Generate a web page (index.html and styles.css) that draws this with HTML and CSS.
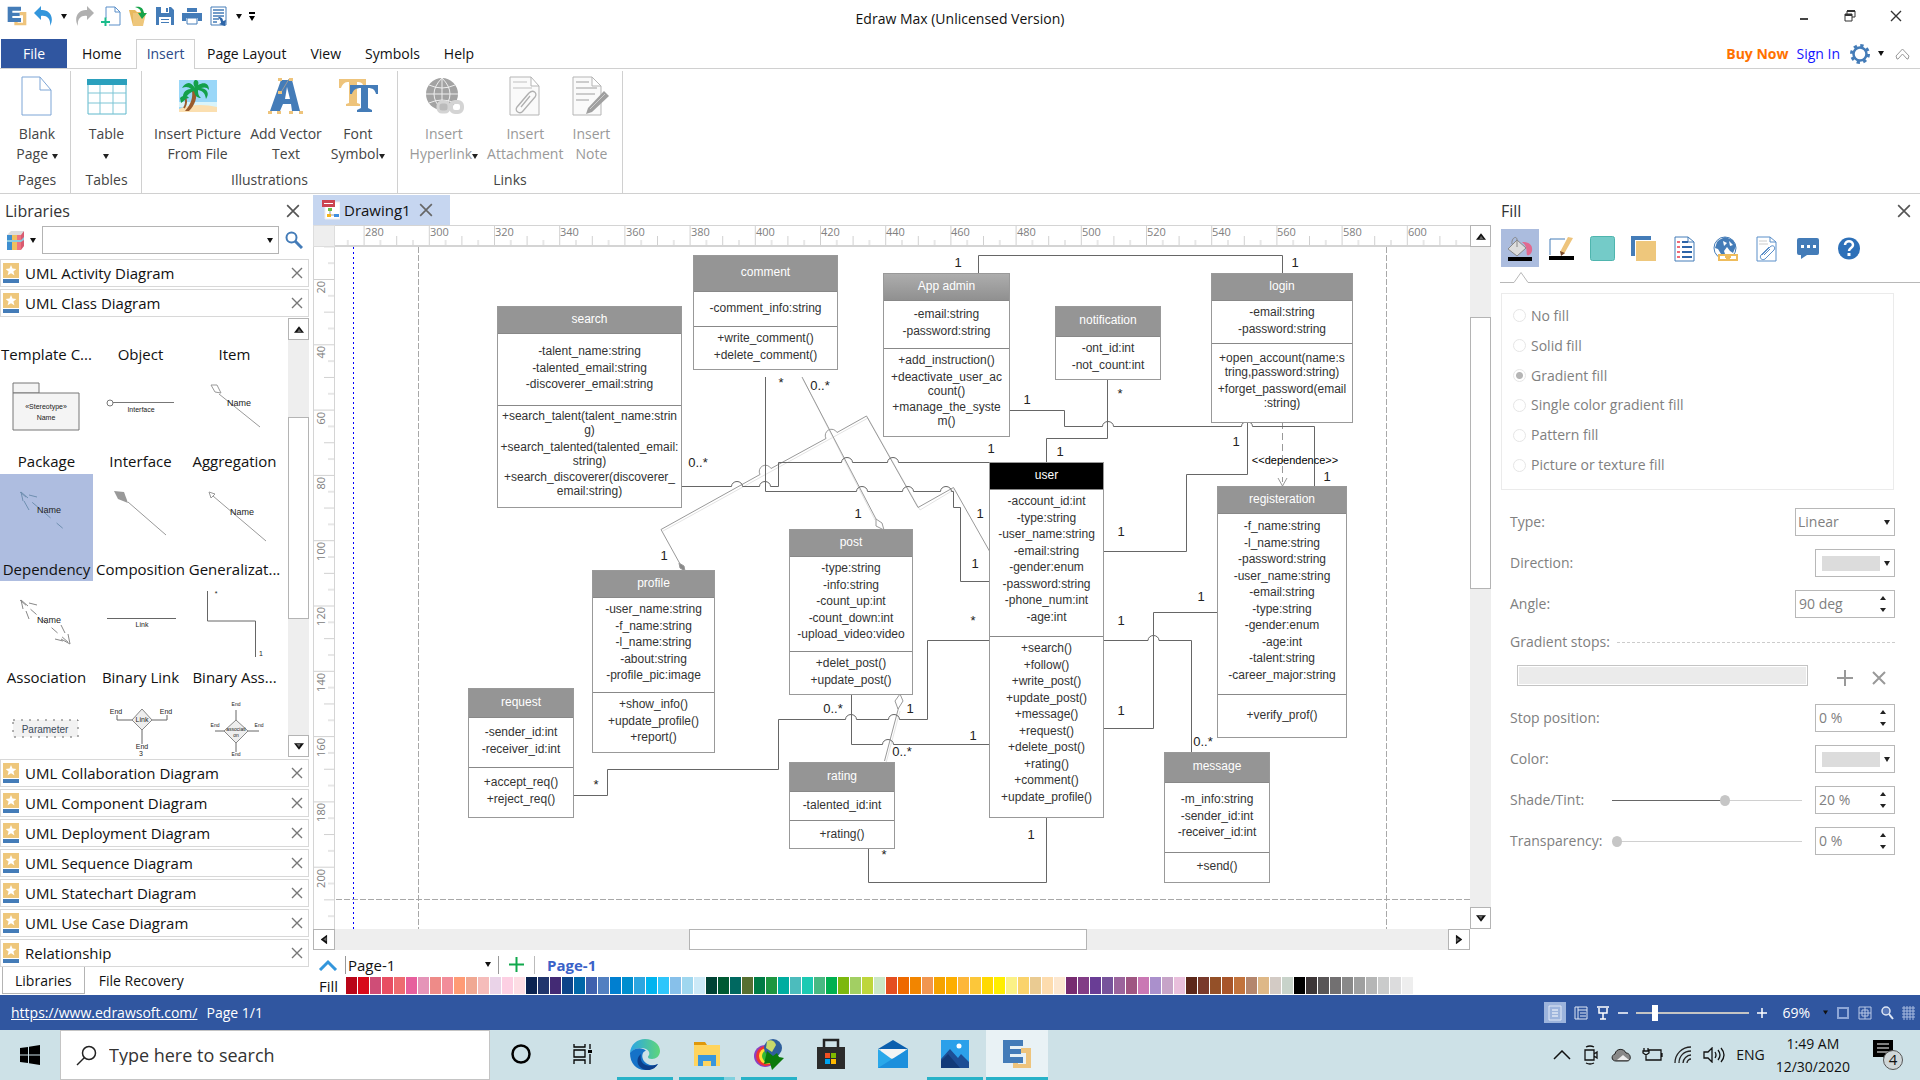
FILE: index.html
```html
<!DOCTYPE html>
<html lang="en">
<head>
<meta charset="utf-8">
<title>Edraw Max (Unlicensed Version)</title>
<link rel="stylesheet" href="styles.css">
</head>
<body>
<svg class="defs" aria-hidden="true">
  <symbol id="close" viewBox="0 0 12 12"><path d="M1 1l10 10M11 1L1 11" fill="none" stroke="currentColor" stroke-width="1.4"/></symbol>
  <symbol id="caret" viewBox="0 0 6 5"><path d="M0 0h6L3 5z" fill="currentColor"/></symbol>
  <symbol id="tri" viewBox="0 0 12 8"><path d="M0 8h12L6 0z" fill="#111"/><path d="M4 7h5L6 3z" fill="#666"/></symbol>
  <symbol id="spin" viewBox="0 0 6 18"><path d="M0 5h6L3 1zM0 13h6l-3 4z" fill="#222"/></symbol>
  <symbol id="book" viewBox="0 0 16 20"><path d="M0 0h16v15H0z" fill="#eec77c"/><path d="M0 16h16v4H0z" fill="#447cb8"/><path d="M0 15h16v1H0z" fill="#fff"/><path d="M8 2l1.5 3.6 3.900.3-3 2.500 1 3.900L8 10.200 4.600 12.300l1-3.900-3-2.500 3.900-.3z" fill="#fff"/></symbol>
  <symbol id="edraw" viewBox="0 0 30 30"><path d="M19 9h10v20H11v-7h5v3h8V14h-5z" fill="#eec47c"/><path d="M1 1h20v6H8v3h11v5H8v3h13v6H1z" fill="#447cb8"/></symbol>
</svg>

<header class="titlebar">
  <div class="quick">
    <button aria-label="Edraw"><svg width="20" height="20"><use href="#edraw"/></svg></button>
    <button aria-label="Undo"><svg width="20" height="20" viewBox="0 0 20 20"><path d="M0 7L7 0v4c8-1 14 7 9 16 1-7-3-11-9-10v4z" fill="#3396dc"/></svg></button>
    <button class="mini" aria-label="Undo list"><svg width="6" height="5"><use href="#caret"/></svg></button>
    <button aria-label="Redo"><svg width="20" height="20" viewBox="0 0 20 20"><path d="M20 7L13 0v4C5 3-1 11 4 20 3 13 7 9 13 10v4z" fill="#b0b0b0"/></svg></button>
    <button aria-label="New"><svg width="20" height="20" viewBox="0 0 20 20"><path d="M5 12V1h9l5 5v13H8M14 1v5h5" fill="none" stroke="#5b8fc9"/><path d="M0 16h9M4.500 11.500v9" stroke="#1abc8c" stroke-width="2"/></svg></button>
    <button aria-label="Open"><svg width="20" height="20" viewBox="0 0 20 20"><path d="M1 4h6l2 2h7v10L5 20z" fill="#e8b95f"/><path d="M5 7h13l-3 13H5z" fill="#eec77c"/><path d="M7 1c6-1 8 1 9 6h3l-5 6-4-6h3c0-3-2-5-6-6z" fill="#16a34a"/></svg></button>
    <button aria-label="Save"><svg width="20" height="20" viewBox="0 0 20 20"><path d="M1 1h15l3 3v15H1z" fill="#447cb8"/><path d="M6 1h8v6H6zM4 11h12v8H4z" fill="#fff"/><path d="M11 2h2v4h-2zM6 13h8v1H6zM6 16h8v1H6z" fill="#447cb8"/></svg></button>
    <button aria-label="Print"><svg width="20" height="20" viewBox="0 0 20 20"><path d="M5 2h10v4H5zM0 7h20v8h-4v-3H4v3H0z" fill="#447cb8"/><path d="M5 12h10v6H5z" fill="#fff" stroke="#447cb8"/></svg></button>
    <button aria-label="Options"><svg width="20" height="20" viewBox="0 0 20 20"><path d="M2 1h15v18H2z" fill="#fff" stroke="#447cb8"/><path d="M4 4h11M4 7h11M4 10h11M4 13h6M4 16h4" stroke="#447cb8" stroke-width="1.500"/><path d="M9 11c4 0 5 2 5 4l3-1-1 6-6-2 2-1c0-2-1-4-3-6z" fill="#2d65a8"/></svg></button>
    <button class="mini" aria-label="Options list"><svg width="6" height="5"><use href="#caret"/></svg></button>
    <button class="mini" aria-label="Customize"><svg width="6" height="9" viewBox="0 0 6 9"><path d="M0 0h6v2H0zM0 4h6L3 9z"/></svg></button>
  </div>
  <h1>Edraw Max (Unlicensed Version)</h1>
  <div class="win">
    <button aria-label="Minimize"><svg width="12" height="12"><path d="M2 8h8v2H2z" fill="#444"/></svg></button>
    <button aria-label="Restore"><svg width="12" height="12" viewBox="0 0 12 12"><path d="M3 4V1h8v6H8M1 4h7v7H1z" fill="none" stroke="#333"/><path d="M3 1h8M1 5h7" stroke="#333" stroke-width="2"/></svg></button>
    <button aria-label="Close"><svg width="12" height="12"><use href="#close"/></svg></button>
  </div>
</header>

<nav class="tabs">
  <a href="#file" class="tab file">File</a>
  <a href="#home" class="tab home">Home</a>
  <a href="#insert" class="tab on">Insert</a>
  <a href="#layout" class="tab">Page Layout</a>
  <a href="#view" class="tab">View</a>
  <a href="#symbols" class="tab">Symbols</a>
  <a href="#help" class="tab">Help</a>
  <div class="account">
    <a href="#buy" class="buy">Buy Now</a>
    <a href="#sign" class="sign">Sign In</a>
    <button aria-label="Settings"><svg width="20" height="20" viewBox="0 0 20 20"><circle cx="10" cy="10" r="8.500" fill="none" stroke="#447cb8" stroke-width="3" stroke-dasharray="3.300 3.375"/><circle cx="10" cy="10" r="6.500" fill="none" stroke="#447cb8" stroke-width="2.500"/></svg></button>
    <button aria-label="Settings list"><svg width="6" height="5"><use href="#caret"/></svg></button>
    <button aria-label="Collapse ribbon" class="fold"><svg width="15" height="12" viewBox="0 0 15 12"><path d="M1 8l6.500-7L14 8l-1 3H12L7.500 6 3 11H2z" fill="none" stroke="#999"/></svg></button>
  </div>
</nav>

<section class="ribbon">
  <div class="group g-pages">
    <div class="tools"><button><svg width="32" height="40" viewBox="0 0 32 40"><path d="M1 1h18l11 13v25H1zM19 1v13h11" fill="#fff" stroke="#7da5d6"/></svg><span>Blank<br>Page <svg class="dd"><use href="#caret"/></svg></span></button></div>
    <h2>Pages</h2>
  </div>
  <div class="group g-tables">
    <div class="tools"><button><svg width="40" height="40" viewBox="0 0 40 40"><path d="M1 4h38v34H1z" fill="#fff" stroke="#5fb8cc"/><path d="M1 17h38M1 27h38M13 8v30M26 8v30" stroke="#7cc5d5" fill="none"/><path d="M0 3h40v6H0z" fill="#2ba0bd"/></svg><span>Table<br><svg class="dd"><use href="#caret"/></svg></span></button></div>
    <h2>Tables</h2>
  </div>
  <div class="group g-ill">
    <div class="tools">
      <button><svg width="40" height="40" viewBox="0 0 40 40"><path d="M1 4h38v32H1z" fill="#9ad7f8"/><path d="M1 26h38v5H1z" fill="#d9f4fb"/><path d="M1 33c10-5 26-5 38-2v5H1z" fill="#fbdfb0"/><path d="M17 14c3 7 0 15-6 21h-4c6-7 8-13 7-20z" fill="#9a5b2c"/><path d="M7 21c2 4 1 8-1 11" stroke="#9a5b2c" stroke-width="2" fill="none"/><path d="M17 12C12 4 7 7 4 12c4-2 7-1 9 1-6 0-10 5-7 12 2-5 5-8 10-10 1 5 3 7 7 7-3-3-3-5-3-8 5 1 7 3 8 9 4-6 1-10-5-11 3-1 6-1 8 2 0-6-4-9-11-5 1-3 0-5-3-5-2 2-2 4 0 8z" fill="#14a04a"/><path d="M2 22c3-3 7-3 9 0-3 0-5 3-8 5z" fill="#14a04a"/></svg><span>Insert Picture<br>From File</span></button>
      <button><svg width="40" height="40" viewBox="0 0 40 40"><path d="M15 4h11l8 31h-8l-1-7h-8l-3 7H4z" fill="#447cb8"/><path d="M21 11l3 12h-5z" fill="#fff"/><path d="M14 18l9-15" stroke="#999" fill="none"/><path d="M12 2h4v3h-4zM23 2h4v3h-4zM12 15h4v3h-4zM2 35h4v3H2zM11 35h4v3h-4zM23 35h4v3h-4zM33 35h4v3h-4z" fill="#eec47c"/></svg><span>Add Vector<br>Text</span></button>
      <button><svg width="40" height="40" viewBox="0 0 40 40"><path d="M1 3h27v7h-3c0-3-2-4-6-4v21l3 1v2H8v-2l3-1V6C7 6 5 7 3 12H1z" fill="#eec47c"/><path d="M12 9h28v9h-2c-1-4-3-6-8-6v20l4 2v2H19v-2l4-2V12c-5 0-8 2-9 6h-2z" fill="#447cb8"/></svg><span>Font<br>Symbol<svg class="dd"><use href="#caret"/></svg></span></button>
    </div>
    <h2>Illustrations</h2>
  </div>
  <div class="group g-links">
    <div class="tools">
      <button disabled><svg width="40" height="40" viewBox="0 0 40 40"><circle cx="18" cy="18" r="16" fill="#a3a3a3"/><path d="M2 18h32M18 2v32M5 9q13 6 26 0M5 27q13-6 26 0M18 2q-16 16 0 32M18 2q16 16 0 32" stroke="#eee" fill="none"/><rect x="14" y="26" width="11" height="10" rx="4" fill="#bbb" stroke="#d4d4d4" stroke-width="3"/><rect x="27" y="26" width="11" height="10" rx="4" fill="none" stroke="#d4d4d4" stroke-width="4"/></svg><span>Insert<br>Hyperlink<svg class="dd"><use href="#caret"/></svg></span></button>
      <button disabled><svg width="32" height="40" viewBox="0 0 32 40"><path d="M1 1h21l8 9v29H1zM22 1v9h8" fill="#fafafa" stroke="#b5b5b5"/><path d="M4 6h14M4 12h19" stroke="#ddd" stroke-width="2"/><path d="M9 30l11-13c4-4 9 0 6 4L14 35c-3 4-9 0-6-4l11-13m-7 13l9-11" fill="none" stroke="#b0b0b0" stroke-width="1.300"/></svg><span>Insert<br>Attachment</span></button>
      <button disabled><svg width="38" height="40" viewBox="0 0 38 40"><path d="M1 1h19l9 9v29H1zM20 1v9h9" fill="#fafafa" stroke="#b5b5b5"/><path d="M4 6h13M4 12h21M4 18h19M4 24h13" stroke="#ccc" stroke-width="2"/><path d="M32 15l5 5-17 16-6 2 2-6z" fill="#a0a0a0"/><path d="M18 33l15-15" stroke="#ccc"/></svg><span>Insert<br>Note</span></button>
    </div>
    <h2>Links</h2>
  </div>
</section>

<main>
<aside class="left">
  <div class="panel-title"><h2>Libraries</h2><button aria-label="Close libraries"><svg width="14" height="14"><use href="#close"/></svg></button></div>
  <div class="search">
    <button aria-label="Choose library"><svg width="17" height="20" viewBox="0 0 17 20"><path d="M0 5l4-4h12l1 1v14l-4 4H0z" fill="#ddd"/><path d="M0 5h5v15H0z" fill="#3e8fd0"/><path d="M5 5h5v15H5z" fill="#eec060"/><path d="M10 5h4v15h-4z" fill="#ee7480"/><path d="M14 5l3-4v15l-3 4z" fill="#d95b70"/><path d="M0 10h14l3-3v3l-3 2H0z" fill="#8ccbe0"/></svg></button>
    <svg width="6" height="5"><use href="#caret"/></svg>
    <span class="combo"><input type="text" aria-label="Search libraries"><svg width="6" height="5"><use href="#caret"/></svg></span>
    <button aria-label="Search"><svg width="18" height="18" viewBox="0 0 18 18"><circle cx="6.500" cy="6.500" r="5" fill="none" stroke="#447cb8" stroke-width="2"/><path d="M10 10l7 7" stroke="#447cb8" stroke-width="3"/></svg></button>
  </div>
  <ul class="libs">
    <li><svg width="16" height="20"><use href="#book"/></svg><a href="#a">UML Activity Diagram</a><button aria-label="Close"><svg width="12" height="12"><use href="#close"/></svg></button></li>
    <li><svg width="16" height="20"><use href="#book"/></svg><a href="#b">UML Class Diagram</a><button aria-label="Close"><svg width="12" height="12"><use href="#close"/></svg></button></li>
  </ul>
  <div class="stencil">
    <div class="shapes">
      <div class="shape first">Template C...</div><div class="shape first">Object</div><div class="shape first">Item</div>
      <div class="shape"><svg width="92" height="84" viewBox="0 0 92 84"><g fill="#f4f4f4" stroke="#777"><path d="M12 17h26v10H12z"/><path d="M12 27h66v37H12z"/></g><g class="tiny"><text x="45" y="43">«Stereotype»</text><text x="45" y="54">Name</text></g></svg>Package</div>
      <div class="shape"><svg width="92" height="84" viewBox="0 0 92 84"><circle cx="15" cy="37" r="3" fill="none" stroke="#777"/><path d="M18 36.500h61" stroke="#777"/><g class="tiny"><text x="46" y="46">Interface</text></g></svg>Interface</div>
      <div class="shape"><svg width="92" height="84" viewBox="0 0 92 84"><path d="M30 28l41 33M22 19l6 0 4 8-6-1z" fill="none" stroke="#999"/><g class="tiny big"><text x="50" y="40">Name</text></g></svg>Aggregation</div>
      <div class="shape sel"><svg width="92" height="84" viewBox="0 0 92 84"><path d="M19 18l46 39" fill="none" stroke="#6f8fb0" stroke-dasharray="8 8"/><path d="M28 36l-5-9M36 23l-8-2M22 27l-2-9 7 6" fill="none" stroke="#6f8fb0"/><g class="tiny big"><text x="48" y="39">Name</text></g></svg>Dependency</div>
      <div class="shape"><svg width="92" height="84" viewBox="0 0 92 84"><path d="M19 17l10 1 4 11-10-4z" fill="#999"/><path d="M33 28l38 33" stroke="#999"/></svg>Composition</div>
      <div class="shape"><svg width="92" height="84" viewBox="0 0 92 84"><path d="M24 22l53 45M20 18l2 6 4-4z" fill="#fff" stroke="#999"/><g class="tiny big"><text x="53" y="41">Name</text></g></svg>Generalizat...</div>
      <div class="shape"><svg width="92" height="84" viewBox="0 0 92 84"><path d="M19 18l49 43" fill="none" stroke="#888" stroke-dasharray="8 6"/><path d="M28 37l-3-8M36 23l-8-2M22 27l-2-9 7 6M60 43l4 8M54 57l8 2M67 52l2 10-9-5" fill="none" stroke="#888"/><g class="tiny big"><text x="48" y="41">Name</text></g></svg>Association</div>
      <div class="shape"><svg width="92" height="84" viewBox="0 0 92 84"><path d="M12 36.500h69" stroke="#666"/><g class="tiny"><text x="47" y="45">Link</text></g></svg>Binary Link</div>
      <div class="shape"><svg width="92" height="84" viewBox="0 0 92 84"><path d="M18.500 9v30h48v36" fill="none" stroke="#666"/><g class="tiny"><text x="27" y="14">*</text><text x="72" y="74">1</text></g></svg>Binary Ass...</div>
      <div class="shape"><svg width="92" height="84" viewBox="0 0 92 84"><path d="M12 30h65v17H12z" fill="#f2f2f2" stroke="#666" stroke-dasharray="2 6"/><g class="tiny param"><text x="44" y="43">Parameter</text></g></svg></div>
      <div class="shape"><svg width="92" height="84" viewBox="0 0 92 84"><path d="M37 30H22v-5M57 30h15v-5M47 40v14" stroke="#666" fill="none"/><path d="M47 19l10 11-10 10-10-10z" fill="#eee" stroke="#888"/><g class="tiny"><text x="47" y="32">Link</text><text x="21" y="24">End</text><text x="71" y="24">End</text><text x="47" y="59">End</text><text x="46" y="66">3</text></g></svg></div>
      <div class="shape"><svg width="92" height="84" viewBox="0 0 92 84"><path d="M36 41H26M59 41h11M47 31V20M47 53v9" stroke="#666" fill="none"/><path d="M47 30l12 11-12 12-12-12z" fill="#eee" stroke="#888"/><g class="tiny small"><text x="47" y="41">associati</text><text x="47" y="47">on</text><text x="47" y="16">End</text><text x="26" y="37">End</text><text x="70" y="37">End</text><text x="47" y="66">End</text></g></svg></div>
    </div>
    <div class="vbar"><button aria-label="Scroll up"><svg width="10" height="7"><use href="#tri"/></svg></button><i class="t1"></i><i class="thumb t2"></i><i class="t3"></i><button aria-label="Scroll down"><svg width="10" height="7" class="down"><use href="#tri"/></svg></button></div>
  </div>
  <ul class="libs">
    <li><svg width="16" height="20"><use href="#book"/></svg><a href="#c">UML Collaboration Diagram</a><button aria-label="Close"><svg width="12" height="12"><use href="#close"/></svg></button></li>
    <li><svg width="16" height="20"><use href="#book"/></svg><a href="#d">UML Component Diagram</a><button aria-label="Close"><svg width="12" height="12"><use href="#close"/></svg></button></li>
    <li><svg width="16" height="20"><use href="#book"/></svg><a href="#e">UML Deployment Diagram</a><button aria-label="Close"><svg width="12" height="12"><use href="#close"/></svg></button></li>
    <li><svg width="16" height="20"><use href="#book"/></svg><a href="#f">UML Sequence Diagram</a><button aria-label="Close"><svg width="12" height="12"><use href="#close"/></svg></button></li>
    <li><svg width="16" height="20"><use href="#book"/></svg><a href="#g">UML Statechart Diagram</a><button aria-label="Close"><svg width="12" height="12"><use href="#close"/></svg></button></li>
    <li><svg width="16" height="20"><use href="#book"/></svg><a href="#h">UML Use Case Diagram</a><button aria-label="Close"><svg width="12" height="12"><use href="#close"/></svg></button></li>
    <li><svg width="16" height="20"><use href="#book"/></svg><a href="#i">Relationship</a><button aria-label="Close"><svg width="12" height="12"><use href="#close"/></svg></button></li>
  </ul>
  <div class="foot-tabs"><a href="#libraries" class="on">Libraries</a><a href="#recovery">File Recovery</a></div>
</aside>

<section class="center">
  <div class="doc-tabs"><div class="doc"><svg width="18" height="20" viewBox="0 0 18 20"><path d="M3 2h15v17H3z" fill="#fff" stroke="#eee"/><path d="M0 0h13v7H0z" fill="#cb4450"/><path d="M2 3h9v1H2z" fill="#fff"/><path d="M6 8h4v3H6z" fill="#6cbd45"/><path d="M8 11v4h4" stroke="#999" fill="none"/><path d="M5 14h4v3H5z" fill="#f5b31a"/><path d="M12 14h5v3h-5z" fill="#3e8fe0"/></svg><a href="#drawing1">Drawing1</a><button aria-label="Close drawing"><svg width="14" height="14"><use href="#close"/></svg></button></div></div>
  <div class="workspace">
    <div class="corner"></div>
    <svg class="hruler" aria-hidden="true">
      <defs><pattern id="hp" x="28.600" y="0" width="65.200" height="22" patternUnits="userSpaceOnUse"><path d="M.5 0v22M16.800 14v8M33.100 10v12M49.400 14v8" stroke="#d0d0d0"/></pattern></defs>
      <rect width="100%" height="22" fill="url(#hp)"/>
      <g><text x="30" y="10">280</text><text x="95" y="10">300</text><text x="160" y="10">320</text><text x="225" y="10">340</text><text x="291" y="10">360</text><text x="356" y="10">380</text><text x="421" y="10">400</text><text x="486" y="10">420</text><text x="551" y="10">440</text><text x="616" y="10">460</text><text x="682" y="10">480</text><text x="747" y="10">500</text><text x="812" y="10">520</text><text x="877" y="10">540</text><text x="942" y="10">560</text><text x="1008" y="10">580</text><text x="1073" y="10">600</text></g>
    </svg>
    <svg class="vruler" aria-hidden="true">
      <defs><pattern id="vp" x="0" y="32" width="22" height="65.300" patternUnits="userSpaceOnUse"><path d="M0 .5h22M14 16.800h8M10 33.100h12M14 49.400h8" stroke="#d0d0d0"/></pattern></defs>
      <rect width="22" height="100%" fill="url(#vp)"/>
      <g text-anchor="end"><text transform="translate(11 34) rotate(-90)">20</text><text transform="translate(11 99) rotate(-90)">40</text><text transform="translate(11 165) rotate(-90)">60</text><text transform="translate(11 230) rotate(-90)">80</text><text transform="translate(11 295) rotate(-90)">100</text><text transform="translate(11 360) rotate(-90)">120</text><text transform="translate(11 426) rotate(-90)">140</text><text transform="translate(11 491) rotate(-90)">160</text><text transform="translate(11 556) rotate(-90)">180</text><text transform="translate(11 622) rotate(-90)">200</text></g>
    </svg>
    <div class="canvas">
      <svg class="wires" width="1134" height="682" viewBox="336 247 1134 682">
        <g fill="none" shape-rendering="crispEdges">
          <path d="M353.500 247v682" stroke="#00f" stroke-dasharray="2 3"/>
          <path d="M418.500 247v682M1386.500 247v682M336 899.500h1134" stroke="#a8a8a8" stroke-dasharray="6 2"/>
        </g>
        <g fill="none" stroke="#e4e4e4">
          <path d="M663 531L868 418l52 92 35-21"/>
          <path d="M803 379l72 141M886 763l14-52"/>
        </g>
        <g fill="none" stroke="#999">
          <path d="M679.500 563L661 529.500l99-55a6 6 0 0 1 11-6l55-30a6 6 0 0 1 11-6L866.500 416 918 507.500l35.500-20L990 552"/>
          <path d="M802 377l74 142 6 4 2 7-8-4v-7M884.500 761l14-53M900 694l-5 7 3 8 5-8z"/>
          <path d="M679 563l5 3 1 5-5-3z" fill="#888"/>
        </g>
        <path d="M1282.500 422v60" fill="none" stroke="#999" stroke-dasharray="7 4"/>
        <path d="M1278 478l4.500 8 4.500-8" fill="none" stroke="#999"/>
        <g fill="none" stroke="#666">
          <path d="M978.500 273v-17.500h304V273"/>
          <path d="M1009.500 396v14.500h55v16h38a5.500 5 0 0 1 11 0h128a5.500 5 0 0 1 11 0h62V486"/>
          <path d="M1107.500 379v59.500h-61V462"/>
          <path d="M1247.500 422v52.500h-61v77H1104"/>
          <path d="M765.500 377v114.500h91a5.500 5 0 0 1 11 0h35a5.500 5 0 0 1 11 0h27a5.500 5 0 0 1 11 0h2v16h7v74h29.500"/>
          <path d="M681.500 457v29.500h50a5.500 5 0 0 1 11 0h17a5.500 5 0 0 1 11 0h8v-24h63a5.500 5 0 0 1 11 0h35a5.500 5 0 0 1 11 0h91"/>
          <path d="M573.500 785v10.500h34v-26h171v-50h67a5.500 5 0 0 1 11 0h32a5.500 5 0 0 1 11 0h28v-79H990"/>
          <path d="M851.500 694v50.500h31a5.500 5 0 0 1 11 0h96V729"/>
          <path d="M868.500 848v34.500h178V817"/>
          <path d="M1104 640.500h44a5.500 5 0 0 1 11 0h32.500V752"/>
          <path d="M1217 612.500h-63.500v116H1104"/>
        </g>
        <g class="marks">
          <text x="958" y="267">1</text><text x="1295" y="267">1</text><text x="1027" y="404">1</text><text x="1060" y="456">1</text><text x="991" y="453">1</text><text x="1236" y="446">1</text><text x="1327" y="481">1</text><text x="980" y="518">1</text><text x="1120" y="398">*</text><text x="781" y="387">*</text><text x="820" y="390">0..*</text><text x="698" y="467">0..*</text><text x="858" y="518">1</text><text x="664" y="560">1</text><text x="975" y="568">1</text><text x="973" y="625">*</text><text x="833" y="713">0..*</text><text x="910" y="713">1</text><text x="902" y="756">0..*</text><text x="973" y="740">1</text><text x="596" y="789">*</text><text x="884" y="859">*</text><text x="1121" y="536">1</text><text x="1201" y="601">1</text><text x="1121" y="625">1</text><text x="1121" y="715">1</text><text x="1203" y="746">0..*</text><text x="1031" y="839">1</text><text class="dep" x="1295" y="464">&lt;&lt;dependence&gt;&gt;</text>
        </g>
      </svg>
      <article class="node n-search"><h3>search</h3><ul><li>-talent_name:string</li><li>-talented_email:string</li><li>-discoverer_email:string</li></ul><ul><li>+search_talent(talent_name:strin<br>g)</li><li>+search_talented(talented_email:<br>string)</li><li>+search_discoverer(discoverer_<br>email:string)</li></ul></article>
      <article class="node n-comment"><h3>comment</h3><ul><li>-comment_info:string</li></ul><ul><li>+write_comment()</li><li>+delete_comment()</li></ul></article>
      <article class="node n-admin"><h3>App admin</h3><ul><li>-email:string</li><li>-password:string</li></ul><ul><li>+add_instruction()</li><li>+deactivate_user_ac<br>count()</li><li>+manage_the_syste<br>m()</li></ul></article>
      <article class="node n-notification"><h3>notification</h3><ul><li>-ont_id:int</li><li>-not_count:int</li></ul></article>
      <article class="node n-login"><h3>login</h3><ul><li>-email:string</li><li>-password:string</li></ul><ul><li>+open_account(name:s<br>tring,password:string)</li><li>+forget_password(email<br>:string)</li></ul></article>
      <article class="node n-user"><h3>user</h3><ul><li>-account_id:int</li><li>-type:string</li><li>-user_name:string</li><li>-email:string</li><li>-gender:enum</li><li>-password:string</li><li>-phone_num:int</li><li>-age:int</li></ul><ul><li>+search()</li><li>+follow()</li><li>+write_post()</li><li>+update_post()</li><li>+message()</li><li>+request()</li><li>+delete_post()</li><li>+rating()</li><li>+comment()</li><li>+update_profile()</li></ul></article>
      <article class="node n-registration"><h3>registeration</h3><ul><li>-f_name:string</li><li>-l_name:string</li><li>-password:string</li><li>-user_name:string</li><li>-email:string</li><li>-type:string</li><li>-gender:enum</li><li>-age:int</li><li>-talent:string</li><li>-career_major:string</li></ul><ul><li>+verify_prof()</li></ul></article>
      <article class="node n-message"><h3>message</h3><ul><li>-m_info:string</li><li>-sender_id:int</li><li>-receiver_id:int</li></ul><ul><li>+send()</li></ul></article>
      <article class="node n-post"><h3>post</h3><ul><li>-type:string</li><li>-info:string</li><li>-count_up:int</li><li>-count_down:int</li><li>-upload_video:video</li></ul><ul><li>+delet_post()</li><li>+update_post()</li></ul></article>
      <article class="node n-profile"><h3>profile</h3><ul><li>-user_name:string</li><li>-f_name:string</li><li>-l_name:string</li><li>-about:string</li><li>-profile_pic:image</li></ul><ul><li>+show_info()</li><li>+update_profile()</li><li>+report()</li></ul></article>
      <article class="node n-request"><h3>request</h3><ul><li>-sender_id:int</li><li>-receiver_id:int</li></ul><ul><li>+accept_req()</li><li>+reject_req()</li></ul></article>
      <article class="node n-rating"><h3>rating</h3><ul><li>-talented_id:int</li></ul><ul><li>+rating()</li></ul></article>
    </div>
    <div class="vbar main-v"><button aria-label="Scroll up"><svg width="10" height="7"><use href="#tri"/></svg></button><i class="t1"></i><i class="thumb t2"></i><i class="t3"></i><button aria-label="Scroll down"><svg width="10" height="7" class="down"><use href="#tri"/></svg></button></div>
    <div class="hbar"><button aria-label="Scroll left"><svg width="10" height="7" class="lft"><use href="#tri"/></svg></button><i class="t1"></i><i class="thumb t2"></i><i class="t3"></i><button aria-label="Scroll right"><svg width="10" height="7" class="rgt"><use href="#tri"/></svg></button></div>
  </div>
  <div class="pages">
    <button aria-label="Expand pages"><svg width="20" height="12" viewBox="0 0 20 12"><path d="M2 11l8-8 8 8" fill="none" stroke="#3396dc" stroke-width="3"/></svg></button>
    <span class="pick"><select aria-label="Page"><option>Page-1</option></select><svg width="6" height="5"><use href="#caret"/></svg></span>
    <button class="add" aria-label="Add page"><svg width="15" height="15"><path d="M7.500 0v15M0 7.500h15" stroke="#10a84c" stroke-width="2"/></svg></button>
    <a href="#page1">Page-1</a>
  </div>
  <div class="palette"><span>Fill</span><div class="sw">
<button style="background:#b90418"></button><button style="background:#d8091b"></button><button style="background:#cf4d77"></button><button style="background:#e84e63"></button><button style="background:#ee6b70"></button><button style="background:#e75f9d"></button><button style="background:#e594b8"></button><button style="background:#ee8b88"></button><button style="background:#f28d9a"></button><button style="background:#ff9b75"></button><button style="background:#f0a893"></button><button style="background:#f5bcba"></button><button style="background:#ead3e8"></button><button style="background:#fdd0e3"></button><button style="background:#fddde4"></button><button style="background:#0b2350"></button><button style="background:#21366d"></button><button style="background:#432a74"></button><button style="background:#0c4489"></button><button style="background:#0067a8"></button><button style="background:#3f61ae"></button><button style="background:#5280c1"></button><button style="background:#007fd0"></button><button style="background:#008ecf"></button><button style="background:#2da6e0"></button><button style="background:#00b4ef"></button><button style="background:#2ec6fb"></button><button style="background:#87c0ea"></button><button style="background:#9fd7ef"></button><button style="background:#cce9f7"></button><button style="background:#004234"></button><button style="background:#005a33"></button><button style="background:#006860"></button><button style="background:#576f31"></button><button style="background:#007b45"></button><button style="background:#1d9640"></button><button style="background:#00ada0"></button><button style="background:#4cbcbd"></button><button style="background:#1bcab3"></button><button style="background:#48b982"></button><button style="background:#00b050"></button><button style="background:#7cb80e"></button><button style="background:#a2cf63"></button><button style="background:#bed63b"></button><button style="background:#cbe7c4"></button><button style="background:#e44e20"></button><button style="background:#ee6900"></button><button style="background:#f28500"></button><button style="background:#f19650"></button><button style="background:#f5a300"></button><button style="background:#fdae00"></button><button style="background:#fdb73a"></button><button style="background:#fcc73a"></button><button style="background:#ffd900"></button><button style="background:#ffee00"></button><button style="background:#fbf186"></button><button style="background:#fad36c"></button><button style="background:#eacb92"></button><button style="background:#fddcae"></button><button style="background:#fce7cf"></button><button style="background:#772b70"></button><button style="background:#823d86"></button><button style="background:#693d95"></button><button style="background:#77539b"></button><button style="background:#9b649c"></button><button style="background:#9f5682"></button><button style="background:#ca78b4"></button><button style="background:#aa90cc"></button><button style="background:#c7a4c8"></button><button style="background:#e9bfdc"></button><button style="background:#5c271a"></button><button style="background:#793a2c"></button><button style="background:#945028"></button><button style="background:#a8552a"></button><button style="background:#c2733c"></button><button style="background:#b4866d"></button><button style="background:#deb887"></button><button style="background:#d3cbc5"></button><button style="background:#c8d3ca"></button><button style="background:#000000"></button><button style="background:#3c3637"></button><button style="background:#595657"></button><button style="background:#727071"></button><button style="background:#898989"></button><button style="background:#9fa0a0"></button><button style="background:#b5b6b6"></button><button style="background:#cacbcb"></button><button style="background:#dcdcdd"></button><button style="background:#eeeeee"></button>
  </div></div>
</section>

<aside class="right">
  <div class="panel-title"><h2>Fill</h2><button aria-label="Close fill"><svg width="14" height="14"><use href="#close"/></svg></button></div>
  <div class="modes">
    <button class="on" aria-label="Fill"><svg width="26" height="26" viewBox="0 0 26 26"><path d="M14 6c7 0 11 3 10 9-1 4-4 5-5 4-1-4 1-8-5-13z" fill="#e2698f"/><path d="M9 4l9 8-9 8-9-7z" fill="#ddd" stroke="#888"/><path d="M4 8C3 2 9-1 9 4v7" fill="none" stroke="#888"/><path d="M0 21h24v4H0z"/></svg></button>
    <button aria-label="Line"><svg width="26" height="26" viewBox="0 0 26 26"><path d="M1 19V3h15" fill="none" stroke="#447cb8"/><path d="M19 1l5 1-9 16-4-2z" fill="#eec47c"/><path d="M11 15l5 2-4 3z" fill="#7b4b2b"/><path d="M0 20h25v4H0z"/></svg></button>
    <button aria-label="Shadow"><svg width="26" height="26" viewBox="0 0 26 26"><rect x=".5" y=".5" width="24" height="24" rx="2" fill="#74cbc8" stroke="#4fb5ae"/></svg></button>
    <button aria-label="Layers"><svg width="26" height="26" viewBox="0 0 26 26"><path d="M0 0h20v20H0z" fill="#447cb8"/><path d="M4 4h21v21H4z" fill="#fff"/><path d="M5 5h20v20H5z" fill="#eec77c"/></svg></button>
    <button aria-label="Data"><svg width="26" height="26" viewBox="0 0 26 26"><path d="M3 1h13l6 5v19H3zM16 1v5h6" fill="#fff" stroke="#447cb8"/><path d="M10 6h6M10 11h10M10 16h10M10 21h10" stroke="#2d65a8" stroke-width="2"/><path d="M5 6h3M5 11h3M5 16h3M5 21h3" stroke="#ee6a78" stroke-width="2"/></svg></button>
    <button aria-label="Hyperlink"><svg width="26" height="26" viewBox="0 0 26 26"><circle cx="12" cy="12" r="11" fill="#fff" stroke="#447cb8"/><path d="M6 4l6-3 8 3 3 6-3 7-3-2-3-4-3 4 2 6-5-3-3-5-3-1 2-6z" fill="#447cb8"/><path d="M10 5l4 2-3 3zM16 5l4 4-3 1z" fill="#fff"/><path d="M6 19h8v5H6zM16 19h8v5h-8zM12 21h6" fill="#fff" stroke="#eebc5c" stroke-width="2"/></svg></button>
    <button aria-label="Attachment"><svg width="26" height="26" viewBox="0 0 26 26"><path d="M3 1h13l6 5v19H3zM16 1v5h6" fill="#fff" stroke="#5b8fc9"/><path d="M5 5h8M5 8h9" stroke="#ccc"/><path d="M8 19l8-8c3-3 6 0 4 3l-9 9c-3 2-6-1-4-4l8-8m-5 8l6-6" fill="none" stroke="#5b8fc9"/></svg></button>
    <button aria-label="Comment"><svg width="26" height="26" viewBox="0 0 26 26"><path d="M4 2h18q2 0 2 2v13q0 2-2 2H12l-6 4v-4H4q-2 0-2-2V4q0-2 2-2z" fill="#447cb8"/><path d="M6 9h3v3H6zM12 9h3v3h-3zM18 9h3v3h-3z" fill="#fff"/></svg></button>
    <button aria-label="Help"><svg width="26" height="26" viewBox="0 0 26 26"><circle cx="13" cy="12.500" r="11" fill="#2d70b8"/><path d="M9 9c0-5 8-5 8 0 0 3-4 3-4 6" fill="none" stroke="#fff" stroke-width="2.500"/><path d="M11.500 17h3v3h-3z" fill="#fff"/></svg></button>
  </div>
  <svg class="notch" height="12" aria-hidden="true"><path d="M0 11.500H14l7-10 7 10H500" fill="none" stroke="#b8b8b8"/></svg>
  <fieldset disabled>
    <label><input type="radio" name="fill">No fill</label>
    <label><input type="radio" name="fill">Solid fill</label>
    <label><input type="radio" name="fill" checked>Gradient fill</label>
    <label><input type="radio" name="fill">Single color gradient fill</label>
    <label><input type="radio" name="fill">Pattern fill</label>
    <label><input type="radio" name="fill">Picture or texture fill</label>
  </fieldset>
  <div class="form">
    <div class="row"><label for="type">Type:</label><span class="pick wide"><select id="type" disabled><option>Linear</option></select><svg width="6" height="5"><use href="#caret"/></svg></span></div>
    <div class="row"><label for="dir">Direction:</label><button id="dir" class="well"><i></i><svg width="6" height="5"><use href="#caret"/></svg></button></div>
    <div class="row"><label for="angle">Angle:</label><span class="spin wide"><input id="angle" type="text" value="90 deg"><svg width="6" height="18"><use href="#spin"/></svg></span></div>
    <div class="stops"><span>Gradient stops:</span><i></i></div>
    <div class="bar"><i></i><button aria-label="Add stop"><svg width="16" height="16"><path d="M8 0v16M0 8h16" stroke="#999" stroke-width="2"/></svg></button><button aria-label="Remove stop"><svg width="14" height="14" viewBox="0 0 14 14"><path d="M1 1l12 12M13 1L1 13" stroke="#999" stroke-width="2"/></svg></button></div>
    <div class="row"><label for="stop">Stop position:</label><span class="spin"><input id="stop" type="text" value="0 %"><svg width="6" height="18"><use href="#spin"/></svg></span></div>
    <div class="row"><label for="color">Color:</label><button id="color" class="well"><i></i><svg width="6" height="5"><use href="#caret"/></svg></button></div>
    <div class="row"><label for="shade">Shade/Tint:</label><input class="shade" type="range" min="0" max="100" value="60" aria-label="Shade/Tint level"><span class="spin"><input id="shade" type="text" value="20 %"><svg width="6" height="18"><use href="#spin"/></svg></span></div>
    <div class="row"><label for="trans">Transparency:</label><input type="range" min="0" max="100" value="0" aria-label="Transparency level"><span class="spin"><input id="trans" type="text" value="0 %"><svg width="6" height="18"><use href="#spin"/></svg></span></div>
  </div>
</aside>
</main>

<footer class="status">
  <a href="#site">https://www.edrawsoft.com/</a><span>Page 1/1</span>
  <div class="zoom">
    <button class="on" aria-label="Normal view"><svg width="14" height="16" viewBox="0 0 14 16"><path d="M1 1h12v14H1z" fill="#9db4dc" stroke="#dfe7f5"/><path d="M4 5h6M4 8h6M4 11h6" stroke="#fff"/></svg></button>
    <button aria-label="Outline view"><svg width="14" height="14" viewBox="0 0 14 14"><path d="M1 1h12v12H1zM4 1v12M4 4h9M6 7h6M6 10h6" fill="none" stroke="#dfe7f5"/></svg></button>
    <button aria-label="Presentation"><svg width="14" height="14" viewBox="0 0 14 14"><path d="M1 1h12M3 2v5h8V2M7 7v6M4 13h6" fill="none" stroke="#fff" stroke-width="1.500"/></svg></button>
    <button aria-label="Zoom out"><svg width="10" height="10"><path d="M0 5h10" stroke="#fff" stroke-width="1.500"/></svg></button>
    <input type="range" min="0" max="100" value="15" aria-label="Zoom">
    <button aria-label="Zoom in"><svg width="10" height="10"><path d="M0 5h10M5 0v10" stroke="#fff" stroke-width="1.500"/></svg></button>
    <span class="pct">69%</span>
    <button class="dark" aria-label="Zoom list"><svg width="5" height="5"><use href="#caret"/></svg></button>
    <button aria-label="Fit page"><svg width="14" height="14" viewBox="0 0 14 14"><path d="M2 2h10v10H2z" fill="none" stroke="#8ea6d6" stroke-width="2"/></svg></button>
    <button aria-label="Fit width"><svg width="14" height="14" viewBox="0 0 14 14"><path d="M1 1h12v12H1zM4 4h6v6H4zM7 1v12M1 7h12" fill="none" stroke="#b9c8e6"/></svg></button>
    <button aria-label="Magnify"><svg width="14" height="14" viewBox="0 0 14 14"><circle cx="6" cy="5" r="4" fill="#5877b8" stroke="#dfe7f5" stroke-width="1.500"/><path d="M9 8l4 5" stroke="#dfe7f5" stroke-width="2"/></svg></button>
    <button aria-label="Grid"><svg width="13" height="14" viewBox="0 0 13 14"><path d="M2 0v14M5 0v14M8 0v14M11 0v14M0 2h13M0 5h13M0 8h13M0 11h13" stroke="#a9bbe0"/></svg></button>
  </div>
</footer>

<footer class="taskbar">
  <button class="start" aria-label="Start"><svg width="20" height="20" viewBox="0 0 20 20"><path d="M0 3l8-1v7.500H0zM9 1.800L20 0v9.500H9zM0 10.500h8V18l-8-1zM9 10.500h11V20L9 18.300z"/></svg></button>
  <label class="find"><svg width="21" height="21" viewBox="0 0 21 21"><circle cx="13" cy="8" r="6.500" fill="none" stroke="#222" stroke-width="1.500"/><path d="M8.500 12.500L1 20" stroke="#222" stroke-width="1.500"/></svg><input type="text" placeholder="Type here to search" aria-label="Type here to search"></label>
  <div class="apps">
    <button aria-label="Cortana"><svg width="20" height="20"><circle cx="10" cy="10" r="8.500" fill="none" stroke="#000" stroke-width="2.500"/></svg></button>
    <button aria-label="Task view"><svg width="20" height="20" viewBox="0 0 20 20"><path d="M1 0v3h11V0M1 20v-4h11v4M1 6h11v7H1zM17 0v5M17 10v10" fill="none" stroke="#000" stroke-width="1.300"/><path d="M15 6h4v3h-4z"/></svg></button>
    <button class="open" aria-label="Edge"><svg width="32" height="32" viewBox="0 0 32 32"><defs><linearGradient id="eg"><stop offset="0" stop-color="#2aa4e6"/><stop offset="1" stop-color="#5fd67a"/></linearGradient></defs><path d="M1 16C1 6 9 1 16 1c9 0 15 6 15 12 0 5-4 8-8 8-3 0-4-1-4-2s2-2 1-5C18 9 5 8 1 16z" fill="url(#eg)"/><path d="M1 15c4-6 13-6 16-2-5 0-6 11 4 14 4 1 6 0 8-1-3 4-8 6-13 6C7 32 1 25 1 15z" fill="#1572c8"/><path d="M12 16c-2 8 4 15 17 10-4 7-13 8-18 3-4-4-3-10 1-13z" fill="#0c3f8c"/></svg></button>
    <button class="open more" aria-label="File Explorer"><svg width="28" height="26" viewBox="0 0 28 26"><path d="M1 1h11l2 3H1z" fill="#e0980a"/><path d="M1 4h26v21H1z" fill="#ffd45e"/><path d="M5 14h18v11h-5v-5h-8v5H5z" fill="#3a96dd"/></svg></button>
    <button class="open" aria-label="Download manager"><svg width="32" height="32" viewBox="0 0 32 32"><circle cx="12" cy="18" r="11" fill="#8e3fc0"/><circle cx="13" cy="18" r="10" fill="#e33"/><circle cx="14" cy="18" r="8" fill="#fd3"/><circle cx="15" cy="18" r="6" fill="#3b3"/><circle cx="20" cy="10" r="9" fill="#2f5f9c"/><path d="M14 3c4-2 8 0 9 4l-4 7-6-4z" fill="#c9d96a"/><path d="M14 13l6 5 4-3 2 4 5 1-12 12-2-7-6 1z" fill="#0b7a0b"/></svg></button>
    <button aria-label="Store"><svg width="30" height="32" viewBox="0 0 30 32"><path d="M8 9V2h14v7" fill="none" stroke="#222" stroke-width="2.500"/><path d="M1 9h28v22H1z" fill="#2b2b2b"/><path d="M9 15h5v5H9z" fill="#f25022"/><path d="M15 15h5v5h-5z" fill="#7fba00"/><path d="M9 21h5v5H9z" fill="#00a4ef"/><path d="M15 21h5v5h-5z" fill="#ffb900"/></svg></button>
    <button aria-label="Mail"><svg width="30" height="30" viewBox="0 0 30 30"><path d="M0 10L15 1l15 9z" fill="#0b5fae"/><path d="M3 10h24v9H3z" fill="#f4f4f4"/><path d="M0 10l15 11L30 10v19H0z" fill="#2aa8ea"/><path d="M0 29l30-19v19z" fill="#1c8fdc"/></svg></button>
    <button class="open" aria-label="Photos"><svg width="28" height="28" viewBox="0 0 28 28"><path d="M0 0h28v28H0z" fill="#2ba0ea"/><path d="M0 19L9 9l8 9 3-4 8 8v6H0z" fill="#1d4e95"/><path d="M0 28V21l7-7 12 14z" fill="#123a78"/><circle cx="18" cy="6" r="2.500" fill="#fff"/></svg></button>
    <button class="open now" aria-label="Edraw Max"><svg width="30" height="30"><use href="#edraw"/></svg></button>
  </div>
  <div class="tray">
    <svg width="18" height="10" viewBox="0 0 18 10"><path d="M1 9l8-8 8 8" fill="none" stroke="#111" stroke-width="1.500"/></svg>
    <svg width="18" height="20" viewBox="0 0 18 20"><path d="M3 5h9v10H3zM12 9l3-2v6l-3-2M4 2q4-2 8 0M4 18q4 2 8 0" fill="none" stroke="#111" stroke-width="1.300"/></svg>
    <svg width="20" height="14" viewBox="0 0 20 14"><path d="M5 13c-5 0-5-6-1-7 1-6 9-6 11-1 5 0 6 8 1 8z" fill="#888" stroke="#222"/><path d="M6 12l6-5 6 5z" fill="#eee"/></svg>
    <svg width="21" height="16" viewBox="0 0 21 16"><path d="M6 3h13v10H4V8M20 6v4M2 1v3M6 1v3M1 4h6v2L4 8 1 6z" fill="none" stroke="#111" stroke-width="1.300"/></svg>
    <svg width="18" height="18" viewBox="0 0 18 18"><path d="M1 17C1 8 8 1 17 1M5 17C5 10 10 5 17 5M9 17c0-4 4-8 8-8M13 17c0-2 2-4 4-4" fill="none" stroke="#222" stroke-width="1.300"/></svg>
    <svg width="22" height="16" viewBox="0 0 22 16"><path d="M1 5h4l4-4v14l-4-4H1zM12 5q2 3 0 6M15 3q4 5 0 10M18 1q6 7 0 14" fill="none" stroke="#111" stroke-width="1.300"/></svg>
    <span>ENG</span>
    <div class="clock">1:49 AM<br>12/30/2020</div>
    <button aria-label="Notifications" class="note"><svg width="32" height="32" viewBox="0 0 32 32"><path d="M1 1h20v17h-5v4l-5-4H1z"/><path d="M5 5h12M5 9h12M5 13h12" stroke="#fff"/><circle cx="21" cy="21" r="9.500" fill="#cfd6d8" stroke="#555"/><text x="21" y="26">4</text></svg></button>
  </div>
</footer>
</body>
</html>
```
FILE: styles.css
```css
* { box-sizing: border-box; }
body { margin: 0; min-height: 100vh; display: flex; flex-direction: column; font: 14px/20px "Open Sans", "Noto Sans", sans-serif; color: #111; background: #fff; }
button { border: 0; padding: 0; margin: 0; background: none; font: inherit; color: inherit; display: flex; align-items: center; justify-content: center; }
a { color: inherit; text-decoration: none; }
h1, h2, h3, ul { margin: 0; padding: 0; font: inherit; list-style: none; }
input, select { font: inherit; color: inherit; margin: 0; border: 0; background: none; min-width: 0; }
svg { display: block; flex: none; }
.defs { position: absolute; width: 0; height: 0; }

/* Title bar */
.titlebar { display: grid; grid-template-columns: 1fr auto 1fr; align-items: center; height: 39px; flex: none; }
.titlebar h1 { padding-bottom: 1px; }
.quick { display: flex; align-items: center; gap: 7px; padding-left: 7px; padding-bottom: 7px; }
.quick .mini { width: 6px; }
.win { display: flex; justify-content: flex-end; gap: 34px; padding: 0 18px 8px 0; color: #333; }

/* Ribbon tabs */
.tabs { display: flex; height: 30px; flex: none; border-bottom: 1px solid #d0d0d0; padding-left: 1px; }
.tab { padding: 5px 12px 0; height: 30px; }
.tab.file { width: 66px; text-align: center; background: #3056a0; color: #fff; height: 29px; }
.tab.home { width: 69px; padding: 5px 0 0 15px; }
.tab.on { width: 59px; border: 1px solid #d0d0d0; border-bottom: 0; background: #fff; color: #2c4a88; padding: 4px 0 0; text-align: center; }
.account { margin-left: auto; display: flex; align-items: center; gap: 8px; padding-right: 10px; }
.buy { color: #ff7200; font-weight: 700; }
.sign { color: #1414ff; margin-right: 2px; }
.account .fold { margin-left: 3px; }

/* Ribbon */
.ribbon { display: flex; height: 125px; flex: none; border-bottom: 1px solid #d0d0d0; padding-top: 2px; color: #444; }
.group { border-right: 1px solid #d0d0d0; display: flex; flex-direction: column; justify-content: space-between; padding: 5px 1px 3px; }
.group h2 { text-align: center; }
.g-pages { width: 71px; padding-left: 5px; }
.g-tables { width: 71px; padding-left: 2px; }
.g-ill { width: 256px; }
.g-links { width: 225px; }
.tools { display: flex; justify-content: center; gap: 9px; }
.tools button { flex-direction: column; justify-content: flex-start; gap: 8px; white-space: nowrap; }
.tools button:disabled { color: #999; }
.dd { display: inline-block; width: 6px; height: 5px; color: #222; }

/* Main columns */
main { flex: 1; display: grid; grid-template-columns: 310px minmax(0, 1fr) 420px; }
.panel-title { display: flex; justify-content: space-between; align-items: center; height: 32px; padding: 2px 10px 0 5px; font-size: 16px; color: #333; }
.panel-title button { color: #555; }

/* Library panel */
.left { display: flex; flex-direction: column; }
.search { display: flex; align-items: center; height: 28px; padding-left: 7px; gap: 6px; margin-bottom: 5px; }
.search .combo { display: flex; align-items: center; width: 237px; height: 28px; border: 1px solid #b4b4b4; padding-right: 5px; }
.combo input { flex: 1; height: 26px; }
.libs { display: flex; flex-direction: column; gap: 2px; width: 309px; font-size: 15px; }
.libs li { display: flex; align-items: center; height: 28px; border: 1px solid #d8d8d8; padding: 0 5px 0 2px; gap: 6px; }
.libs button { margin-left: auto; color: #777; }
.stencil { display: flex; width: 309px; height: 439px; margin: 1px 0 2px; overflow: hidden; font-size: 15px; }
.shapes { flex: 1; display: grid; grid-template-columns: 94px 94px 94px; grid-template-rows: 48px repeat(4, 108px); }
.shape { width: 93px; height: 107px; display: flex; flex-direction: column; align-items: center; justify-content: flex-start; white-space: nowrap; gap: 1px; }
.shape.first { height: 46px; justify-content: flex-end; }
.shape.sel { background: #aebde0; }
.tiny { font: 7px "Liberation Sans", sans-serif; text-anchor: middle; fill: #222; }
.tiny.small { font-size: 5px; }
.tiny.big { font-size: 9px; }
.tiny.param { font-size: 10px; fill: #3c4a5c; }
.foot-tabs { display: flex; height: 28px; padding-left: 2px; }
.foot-tabs a { padding: 4px 14px 0; }
.foot-tabs .on { border: 1px solid #b4b4b4; border-top: 0; padding: 4px 12px 0; height: 27px; }

/* Scroll bars */
.vbar, .hbar { display: flex; background: #eee; }
.vbar { flex-direction: column; width: 21px; }
.vbar button { height: 22px; border: 1px solid #b4b4b4; background: #fff; }
.thumb { border: 1px solid #b4b4b4; background: #fff; }
.stencil .t1 { flex: 77; }
.stencil .t2 { flex: 201; }
.stencil .t3 { flex: 117; }
.main-v .t1 { flex: 70; }
.main-v .t2 { flex: 272; }
.main-v .t3 { flex: 319; }
.hbar { height: 21px; }
.hbar button { width: 22px; border: 1px solid #b4b4b4; background: #fff; }
.hbar .t1 { flex: 355; }
.hbar .t2 { flex: 397; }
.hbar .t3 { flex: 362; }
.down { transform: rotate(180deg); }
.lft { transform: rotate(-90deg); }
.rgt { transform: rotate(90deg); }

/* Document area */
.center { display: flex; flex-direction: column; padding: 1px 9px 0 3px; font-size: 15px; }
.doc-tabs { height: 30px; }
.doc { display: flex; align-items: center; gap: 4px; width: 137px; height: 30px; background: #c6d6f0; padding-left: 9px; }
.doc button { margin-left: 4px; color: #666; }
.workspace { flex: 1; display: grid; grid-template-columns: 22px minmax(0, 1fr) 21px; grid-template-rows: 22px minmax(682px, 1fr) 21px; }
.corner { background: #eee; border: 1px solid #ddd; }
.hruler { width: 100%; height: 22px; border-top: 1px solid #d4d4d4; border-bottom: 2px solid #d4d4d4; }
.vruler { grid-column: 1; grid-row: 2; width: 22px; height: 100%; border-left: 1px solid #d4d4d4; border-right: 1px solid #d4d4d4; }
.hruler text, .vruler text { font-size: 11px; fill: #808080; }
.canvas { grid-column: 2; grid-row: 2; position: relative; overflow: hidden; }
.main-v { grid-column: 3; grid-row: 1 / 3; }
.hbar { grid-column: 1 / 3; grid-row: 3; }
.wires { position: absolute; left: 1px; top: 0; }
.marks { font: 13px "Liberation Sans", sans-serif; text-anchor: middle; fill: #222; }
.marks .dep { font-size: 11px; fill: #000; }

/* Class boxes on the drawing */
.node { position: absolute; display: grid; border: 1px solid #999; background: #fff; font: 12px/14px "Liberation Sans", Arial, sans-serif; color: #333; text-align: center; white-space: nowrap; }
.node h3 { background: #959595; color: #fff; display: flex; align-items: center; justify-content: center; padding-bottom: 3px; }
.node ul { border-top: 1px solid #888; }
.node li { padding: 1px 0; }
.node li:nth-child(odd) { padding-bottom: 2px; }
.n-search { left: 162px; top: 59px; width: 185px; grid-template-rows: 26px 72px 102px; }
.n-search ul { padding-top: 9px; }
.n-search ul + ul { padding-top: 2px; }
.n-comment { left: 358px; top: 8px; width: 145px; grid-template-rows: 35px 35px 43px; }
.n-comment ul { padding-top: 8px; }
.n-comment ul + ul { padding-top: 3px; }
.n-admin { left: 548px; top: 26px; width: 127px; grid-template-rows: 26px 48px 88px; }
.n-admin h3 { background: linear-gradient(#adadad, #909090); }
.n-admin ul { padding-top: 5px; }
.n-admin ul + ul { padding-top: 3px; }
.n-notification { left: 720px; top: 59px; width: 106px; grid-template-rows: 29px 43px; }
.n-notification ul { padding-top: 3px; }
.n-login { left: 876px; top: 26px; width: 142px; grid-template-rows: 26px 43px 79px; }
.n-login ul { padding-top: 3px; }
.n-login ul + ul { padding-top: 6px; }
.n-user { left: 654px; top: 215px; width: 115px; grid-template-rows: 26px 147px 181px; }
.n-user h3 { background: #000; }
.n-user ul { padding-top: 3px; }
.n-registration { left: 882px; top: 239px; width: 130px; grid-template-rows: 26px 181px 43px; }
.n-registration ul { padding-top: 4px; }
.n-registration ul + ul { padding-top: 12px; }
.n-message { left: 829px; top: 505px; width: 106px; grid-template-rows: 29px 70px 30px; }
.n-message ul { padding-top: 8px; }
.n-message ul + ul { padding-top: 5px; }
.n-post { left: 454px; top: 282px; width: 124px; grid-template-rows: 26px 95px 43px; }
.n-post ul { padding-top: 3px; }
.n-profile { left: 257px; top: 323px; width: 123px; grid-template-rows: 26px 95px 60px; }
.n-profile ul { padding-top: 3px; }
.n-request { left: 133px; top: 441px; width: 106px; grid-template-rows: 28px 50px 50px; }
.n-request ul { padding-top: 6px; }
.n-rating { left: 454px; top: 515px; width: 106px; grid-template-rows: 28px 29px 28px; }
.n-rating ul { padding-top: 5px; }

/* Page row and palette */
.pages { display: flex; align-items: center; height: 26px; padding: 3px 0 0 5px; }
.pages .pick { display: flex; align-items: center; height: 18px; width: 154px; border: 1px solid #999; border-width: 0 1px; margin-left: 7px; padding-right: 7px; }
.pick select { appearance: none; flex: 1; padding: 0 0 0 2px; outline: 0; opacity: 1; }
.pages .add { padding: 0 10px; border-right: 1px solid #bbb; height: 18px; }
.pages a { color: #3a62c8; font-weight: 700; padding-left: 12px; }
.palette { display: flex; align-items: center; height: 19px; padding-left: 6px; }
.palette span { width: 27px; }
.sw { display: flex; gap: 1px; }
.sw button { width: 11px; height: 17px; }

/* Fill panel */
.right { color: #808080; }
.right .panel-title { padding: 2px 9px 0 1px; color: #333; }
.modes { display: flex; gap: 3px; padding: 3px 0 0 1px; }
.modes button { width: 38px; height: 38px; padding: 1px 0 0 1px; }
.modes .on { background: #abbcde; }
.notch { width: 100%; margin-top: 4px; }
fieldset { margin: 10px 26px 0 1px; border: 1px solid #ebebeb; padding: 7px 11px 9px; height: 197px; display: flex; flex-direction: column; }
fieldset label { display: flex; align-items: center; gap: 5px; height: 30px; }
input[type=radio] { appearance: none; width: 13px; height: 13px; border: 1px solid #e6e6e6; border-radius: 50%; }
input[type=radio]:checked { background: radial-gradient(#b5b5b5 3px, #fff 4px); }
.form { padding: 18px 25px 0 10px; display: flex; flex-direction: column; gap: 13px; }
.row { display: flex; align-items: center; justify-content: space-between; height: 28px; }
.row .pick, .spin, .well { display: flex; align-items: center; width: 80px; height: 28px; border: 1px solid #b8b8b8; }
.row .wide { width: 100px; }
.row .pick, .well { padding-right: 4px; }
.row .pick svg, .well svg { color: #222; }
.spin { padding-right: 8px; }
.spin input { flex: 1; width: 40px; padding: 0 0 0 3px; }
.well { padding-left: 6px; justify-content: space-between; }
.well i { width: 58px; height: 15px; background: #dcdcdc; }
.stops { display: flex; align-items: center; gap: 7px; height: 22px; }
.stops i { flex: 1; border-top: 1px dashed #ccc; }
.bar { display: flex; align-items: center; height: 26px; padding-left: 7px; margin: -4px 0 3px; }
.bar i { width: 291px; height: 21px; border: 1px solid #c4c4c4; background: #ebebeb; box-shadow: inset 0 0 0 1px #fff; }
.bar button { margin: 5px 0 0 19px; }
.bar i + button { margin-left: 29px; }
input[type=range] { appearance: none; height: 14px; }
.row input[type=range] { width: 190px; margin: 0 13px 0 auto; background: linear-gradient(#d0d0d0, #d0d0d0) center / 100% 1px no-repeat; }
.row input.shade[type=range] { background: linear-gradient(#666, #666) left / 60% 1px no-repeat, linear-gradient(#d0d0d0, #d0d0d0) center / 100% 1px no-repeat; }
.row input[type=range]::-webkit-slider-thumb { appearance: none; width: 10px; height: 11px; border-radius: 50%; background: #c6c6c6; }

/* Status bar */
.status { display: flex; align-items: center; height: 35px; flex: none; background: #3056a0; color: #fff; padding: 0 5px 0 11px; gap: 9px; }
.status > a { text-decoration: underline; }
.zoom { margin-left: auto; display: flex; align-items: center; gap: 8px; }
.zoom .on { background: #9db4dc; width: 22px; height: 21px; }
.zoom input { width: 113px; background: linear-gradient(#c4c4c4, #c4c4c4) center / 100% 2px no-repeat; height: 16px; }
.zoom input::-webkit-slider-thumb { appearance: none; width: 6px; height: 16px; background: #fff; }
.pct { padding: 0 5px 0 7px; }
.dark { color: #111; }

/* Task bar */
.taskbar { display: flex; align-items: stretch; height: 50px; flex: none; background: #cde1e7; }
.start { width: 60px; }
.find { display: flex; align-items: center; gap: 12px; width: 430px; padding-left: 15px; background: #fff; border: 1px solid #c4c4c4; font-size: 18px; }
.find input { flex: 1; padding: 0; }
.find input::placeholder { color: #333; }
.apps { display: flex; }
.apps button { width: 62px; border-bottom: 3px solid transparent; }
.apps .open { border-image: linear-gradient(90deg, transparent 6px, #28b2c8 6px, #28b2c8 56px, transparent 56px) 3; }
.apps .more { border-image: linear-gradient(90deg, transparent 6px, #28b2c8 6px, #28b2c8 46px, #80d0de 46px, #80d0de 56px, transparent 56px) 3; }
.apps .now { background: #e9f2f5; border-image: none; border-color: #28b2c8; }
.tray { margin-left: auto; display: flex; align-items: center; gap: 11px; padding-right: 16px; }
.clock { text-align: center; line-height: 23px; }
.note { margin-left: 11px; }
.note text { font: 15px "Open Sans", sans-serif; text-anchor: middle; fill: #111; }
```
